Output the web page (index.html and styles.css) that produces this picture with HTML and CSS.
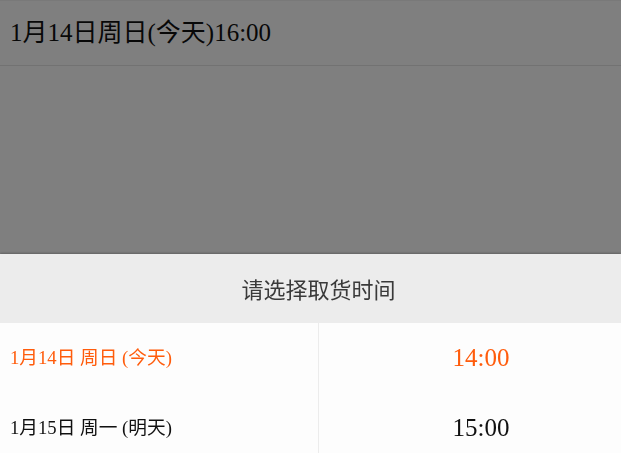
FILE: index.html
```html
<!DOCTYPE html>
<html lang="zh-CN">
<head>
<meta charset="utf-8">
<title>取货时间</title>
<link rel="stylesheet" href="styles.css">
</head>
<body>
<div class="page">
  <div class="field">1月14日周日(今天)16:00</div>
</div>
<div class="mask"></div>
<div class="sheet">
  <div class="sheet-title">请选择取货时间</div>
  <div class="sheet-body">
    <ul class="dates">
      <li class="item active">1月14日 周日 (今天)</li>
      <li class="item">1月15日 周一 (明天)</li>
    </ul>
    <ul class="times">
      <li class="item active">14:00</li>
      <li class="item">15:00</li>
    </ul>
  </div>
</div>
</body>
</html>
```
FILE: styles.css
```css
html, body {
  margin: 0;
  padding: 0;
  height: 453px;
  overflow: hidden;
  background: #ffffff;
}
body {
  font-family: "Liberation Serif", "Noto Sans CJK SC", serif;
  color: #222;
}
.page {
  border-top: 1px solid #f2f2f2;
}
.field {
  height: 64px;
  line-height: 64px;
  padding-left: 10px;
  font-size: 25px;
  color: #111;
  border-bottom: 1px solid #e4e4e4;
}
.mask {
  position: fixed;
  inset: 0;
  background: rgba(0, 0, 0, 0.5);
}
.sheet {
  position: fixed;
  left: 0;
  right: 0;
  top: 254px;
  bottom: 0;
  overflow: hidden;
  display: flex;
  flex-direction: column;
  background: #fdfdfd;
  box-shadow: 0 -1px 2px rgba(0, 0, 0, 0.25);
}
.sheet-title {
  height: 69px;
  flex: none;
  line-height: 69px;
  text-align: center;
  padding-left: 16px;
  background: #ececec;
  font-family: "Noto Sans CJK SC", sans-serif;
  font-size: 22px;
  color: #3a3a3a;
}
.sheet-body {
  flex: 1;
  display: flex;
}
.dates, .times {
  list-style: none;
  margin: 0;
  padding: 0;
}
.dates {
  width: 318px;
  border-right: 1px solid #ececec;
}
.times {
  flex: 1;
  padding-left: 22px;
}
.item {
  height: 70px;
  display: flex;
  align-items: center;
  line-height: 1.2;
  color: #111;
}
.dates .item {
  padding-left: 10px;
  font-size: 18.7px;
}
.times .item {
  justify-content: center;
  font-size: 25px;
}
.item.active {
  color: #ff5c0c;
}
```
